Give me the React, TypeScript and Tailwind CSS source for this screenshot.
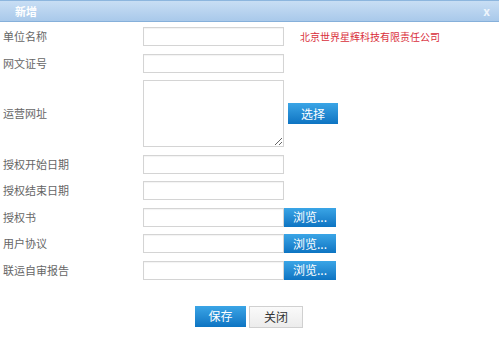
import React from 'react';

const font = { fontFamily: '"Noto Sans CJK SC", "Noto Sans", sans-serif' };

const Field: React.FC<{ label: string; children: React.ReactNode }> = ({ label, children }) => (
  <div className="flex items-center">
    <div className="w-[143px] shrink-0 pl-[3px] text-[11px] text-[#666]">{label}</div>
    {children}
  </div>
);

const TextInput: React.FC = () => (
  <input
    type="text"
    className="h-[19px] w-[141px] border border-[#d4d4d4] bg-white shadow-[inset_0_1px_1px_rgba(0,0,0,0.05)] outline-none"
  />
);

const BlueButton: React.FC<{ children: React.ReactNode; className?: string }> = ({ children, className = '' }) => (
  <button
    className={`flex items-center justify-center bg-gradient-to-b from-[#3aa5e6] to-[#0c74c2] text-[12px] text-white ${className}`}
  >
    {children}
  </button>
);

export default function App() {
  return (
    <div className="w-[499px] h-[340px] bg-white overflow-hidden" style={font}>
      <div className="flex h-[22px] items-center justify-between border-t border-b border-t-[#8db6de] border-b-[#86b0da] bg-gradient-to-b from-[#c8def4] to-[#a9c9ea] px-[15px]">
        <span className="text-[11px] font-bold text-white">新增</span>
        <span className="mr-[-6px] text-[12px] font-bold text-[#eef5fc]">x</span>
      </div>

      <div className="flex flex-col gap-[7.5px] pt-[5px]">
        <Field label="单位名称">
          <TextInput />
          <span className="ml-[16px] text-[10px] text-[#d9303c]">北京世界星辉科技有限责任公司</span>
        </Field>
        <Field label="网文证号">
          <TextInput />
        </Field>
        <Field label="运营网址">
          <textarea className="h-[67px] w-[141px] border border-[#d4d4d4] bg-white outline-none" />
          <BlueButton className="ml-[4px] h-[21px] w-[50px]">选择</BlueButton>
        </Field>
        <Field label="授权开始日期">
          <TextInput />
        </Field>
        <Field label="授权结束日期">
          <TextInput />
        </Field>
        <Field label="授权书">
          <TextInput />
          <BlueButton className="h-[19px] w-[52px] text-[#e8f3fc]">浏览...</BlueButton>
        </Field>
        <Field label="用户协议">
          <TextInput />
          <BlueButton className="h-[19px] w-[52px] text-[#e8f3fc]">浏览...</BlueButton>
        </Field>
        <Field label="联运自审报告">
          <TextInput />
          <BlueButton className="h-[19px] w-[52px] text-[#e8f3fc]">浏览...</BlueButton>
        </Field>
      </div>

      <div className="mt-[26px] flex gap-[3px] pl-[195px]">
        <BlueButton className="h-[21px] w-[51px]">保存</BlueButton>
        <button className="flex h-[22px] w-[54px] items-center justify-center border border-[#d0d0d0] bg-gradient-to-b from-[#fafafa] to-[#ececec] text-[12px] text-[#333]">
          关闭
        </button>
      </div>
    </div>
  );
}
